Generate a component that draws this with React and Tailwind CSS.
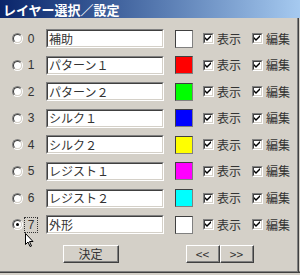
import { useState } from 'react'

const layers = [
  { name: '補助', color: '#ffffff' },
  { name: 'パターン１', color: '#ff0000' },
  { name: 'パターン２', color: '#00ff00' },
  { name: 'シルク１', color: '#0000ff' },
  { name: 'シルク２', color: '#ffff00' },
  { name: 'レジスト１', color: '#ff00ff' },
  { name: 'レジスト２', color: '#00ffff' },
  { name: '外形', color: '#ffffff' },
]

const font = { fontFamily: '"Noto Sans CJK JP", "Noto Sans", sans-serif' }

function Radio({ on }) {
  return (
    <span className="relative block h-[11px] w-[11px] rounded-full border border-t-[#808080] border-l-[#808080] border-b-white border-r-white">
      <span className="flex h-full w-full items-center justify-center rounded-full border border-t-[#404040] border-l-[#404040] border-b-[#d4d0c8] border-r-[#d4d0c8] bg-white">
        {on ? <span className="block h-[3px] w-[3px] rounded-full bg-black" /> : null}
      </span>
    </span>
  )
}

function Check() {
  return (
    <span className="block h-[11px] w-[11px] border border-t-[#808080] border-l-[#808080] border-b-white border-r-white">
      <span className="flex h-full w-full items-center justify-center border border-t-[#404040] border-l-[#404040] border-b-[#d4d0c8] border-r-[#d4d0c8] bg-white">
        <svg width="7" height="7" viewBox="0 0 7 7">
          <path d="M0 2 L2 4 L6 0 L6 2 L2 6 L0 4 Z" fill="#000" />
        </svg>
      </span>
    </span>
  )
}

function Button({ children, className }) {
  return (
    <button
      type="button"
      className={`h-[18px] border border-t-white border-l-white border-b-[#404040] border-r-[#404040] bg-[#d4d0c8] p-0 ${className}`}
    >
      <span className="flex h-full w-full items-center justify-center border-b border-r border-[#808080] text-[12px] text-[#333]" style={font}>
        {children}
      </span>
    </button>
  )
}

export default function App() {
  const [sel, setSel] = useState(7)

  return (
    <div className="relative flex h-[275px] w-[300px] flex-col overflow-hidden bg-[#d4d0c8]" style={font}>
      <div className="flex h-[18px] items-center bg-gradient-to-r from-[#0a246a] to-[#a6caf0] pl-[3px] text-[13px] font-bold leading-none text-white">
        レイヤー選択／設定
      </div>

      <div className="flex flex-col gap-[7.6px] pt-[11px]">
        {layers.map((l, i) => (
          <div key={i} className="flex h-[19px] items-center text-[12px] text-[#333]" onClick={() => setSel(i)}>
            <span className="ml-[12px]">
              <Radio on={sel === i} />
            </span>
            <span
              className={`flex h-[16px] w-[14px] items-center justify-center leading-none ${
                sel === i ? 'border border-dotted border-[#333]' : ''
              }`}
              style={{ marginLeft: '1px', fontFamily: '"Liberation Sans", sans-serif' }}
            >
              {i}
            </span>
            <div className="ml-[8px] h-[19px] w-[118px] border border-t-[#808080] border-l-[#808080] border-b-white border-r-white">
              <div className="flex h-full w-full items-center border border-t-[#404040] border-l-[#404040] border-b-[#d4d0c8] border-r-[#d4d0c8] bg-white pl-[1px] text-[12px] leading-none text-[#333]">
                {l.name}
              </div>
            </div>
            <span className="ml-[11px] h-[18px] w-[18px] border border-t-[#404040] border-l-[#404040] border-b-[#808080] border-r-[#808080]" style={{ background: l.color }} />
            <span className="ml-[10px]">
              <Check />
            </span>
            <span className="ml-[3px] leading-none">表示</span>
            <span className="ml-[11px]">
              <Check />
            </span>
            <span className="ml-[3px] leading-none">編集</span>
          </div>
        ))}
      </div>

      <div className="mt-[11px] flex">
        <Button className="ml-[63px] w-[56px]">決定</Button>
        <Button className="ml-[67px] w-[34px]">&lt;&lt;</Button>
        <Button className="w-[34px]">&gt;&gt;</Button>
      </div>

      <div className="absolute bottom-[2px] left-0 right-0 h-[1px] bg-[#404040]" />
      <div className="absolute bottom-[3px] left-0 right-0 h-[1px] bg-[#808080]" />
      <div className="absolute bottom-[3px] right-[2px] top-[18px] w-[1px] bg-[#808080]" />
      <div className="absolute bottom-[2px] right-[1px] top-[18px] w-[1px] bg-[#404040]" />

      <svg className="absolute left-[25px] top-[233px]" width="9" height="15" viewBox="0 0 9 15">
        <path d="M0.5 0.5 L0.5 11.5 L3 9 L5 13.5 L6.5 13 L4.5 8.5 L8 8.5 Z" fill="#fff" stroke="#000" strokeWidth="1" />
      </svg>
    </div>
  )
}
